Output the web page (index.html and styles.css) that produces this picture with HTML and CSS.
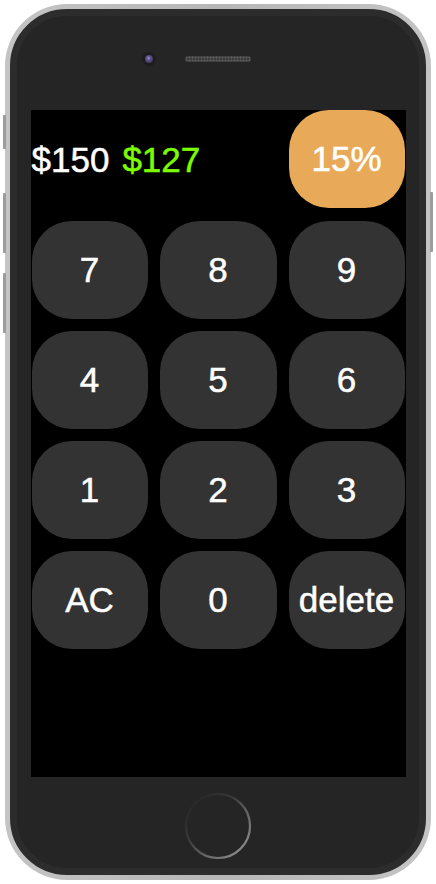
FILE: index.html
```html
<!DOCTYPE html>
<html lang="en">
<head>
<meta charset="utf-8">
<title>Tip Calculator</title>
<link rel="stylesheet" href="styles.css">
</head>
<body>
<div class="phone">
  <span class="side-btn side-mute"></span>
  <span class="side-btn side-vol-up"></span>
  <span class="side-btn side-vol-down"></span>
  <span class="side-btn side-power"></span>
  <div class="body">
    <div class="top">
      <span class="camera"><span class="lens"></span></span>
      <span class="speaker"></span>
      <span></span>
    </div>
    <div class="screen">
      <div class="header">
        <div class="amounts">
          <span class="amount">$150</span>
          <span class="amount total">$127</span>
        </div>
        <div class="key tip">15%</div>
      </div>
      <div class="keypad">
        <div class="key">7</div>
        <div class="key">8</div>
        <div class="key">9</div>
        <div class="key">4</div>
        <div class="key">5</div>
        <div class="key">6</div>
        <div class="key">1</div>
        <div class="key">2</div>
        <div class="key">3</div>
        <div class="key">AC</div>
        <div class="key">0</div>
        <div class="key">delete</div>
      </div>
    </div>
    <div class="bottom">
      <svg class="home" width="68" height="68" viewBox="0 0 68 68">
        <defs>
          <linearGradient id="ring" x1="0.1" y1="0.1" x2="0.9" y2="0.9">
            <stop offset="0" stop-color="#262626"/>
            <stop offset="0.35" stop-color="#3a3a3a"/>
            <stop offset="0.7" stop-color="#6a6a6a"/>
            <stop offset="1" stop-color="#8a8a8a"/>
          </linearGradient>
        </defs>
        <circle cx="34" cy="34" r="32" fill="none" stroke="url(#ring)" stroke-width="2.2"/>
      </svg>
    </div>
  </div>
</div>
</body>
</html>
```

FILE: styles.css
```css
* { box-sizing: border-box; }

html, body {
  margin: 0;
  padding: 0;
  background: #ffffff;
}

body {
  font-family: "Liberation Sans", Arial, Helvetica, sans-serif;
}

.phone {
  position: relative;
  margin: 4px 0 0 5px;
  width: 426px;
  height: 876px;
  padding: 5px;
  border-radius: 62px;
  background: linear-gradient(90deg, #c4c4c4 0%, #b6b6b6 50%, #c4c4c4 100%);
}

.side-btn {
  position: absolute;
  width: 3px;
  background: #9c9c9c;
  border-radius: 1px;
}
.side-mute { left: -2px; top: 111px; height: 34px; }
.side-vol-up { left: -2px; top: 189px; height: 60px; }
.side-vol-down { left: -2px; top: 269px; height: 60px; }
.side-power { right: -2px; top: 188px; height: 60px; }

.body {
  height: 100%;
  border-radius: 57px;
  background: #252525;
  border: 7px solid #2c2c2c;
  display: flex;
  flex-direction: column;
  align-items: center;
}

.top {
  width: 100%;
  height: 94px;
  padding-top: 36px;
  display: grid;
  grid-template-columns: 1fr auto 1fr;
  align-items: start;
}

.camera {
  justify-self: end;
  margin-right: 29px;
  width: 14px;
  height: 14px;
  border-radius: 50%;
  background: #1d1d1d;
  display: flex;
  align-items: center;
  justify-content: center;
}

.lens {
  width: 8px;
  height: 8px;
  border-radius: 50%;
  background: radial-gradient(circle at 45% 40%, #9a90c4 0%, #5a4e8a 35%, #2e2848 100%);
}

.speaker {
  margin-top: 4px;
  width: 66px;
  height: 6px;
  border-radius: 3px;
  background-color: #3c3c3c;
  background-image: radial-gradient(circle, #5c5c5c 45%, transparent 50%);
  background-size: 3px 3px;
}

.screen {
  width: 375px;
  height: 667px;
  background: #000000;
  padding: 0 1px;
  display: flex;
  flex-direction: column;
}

.header,
.keypad {
  display: grid;
  grid-template-columns: 116px 117px 116px;
  column-gap: 12px;
}

.header {
  height: 98px;
}

.amounts {
  grid-column: 1 / span 2;
  display: flex;
  align-items: center;
  gap: 13px;
  font-size: 35px;
  color: #ffffff;
  padding-top: 1px;
  -webkit-text-stroke: 0.5px currentColor;
}

.total {
  color: #7cfc00;
}

.keypad {
  margin-top: 13px;
  grid-auto-rows: 98px;
  row-gap: 12px;
}

.key {
  border-radius: 40px;
  background: #333333;
  color: #ffffff;
  font-size: 35px;
  display: flex;
  align-items: center;
  justify-content: center;
  white-space: nowrap;
  -webkit-text-stroke: 0.5px currentColor;
}

.tip {
  grid-column: 3;
  background: #e8aa58;
}

.bottom {
  height: 91px;
  padding-top: 6px;
  display: flex;
  align-items: center;
  justify-content: center;
}

.home {
  display: block;
}
```
